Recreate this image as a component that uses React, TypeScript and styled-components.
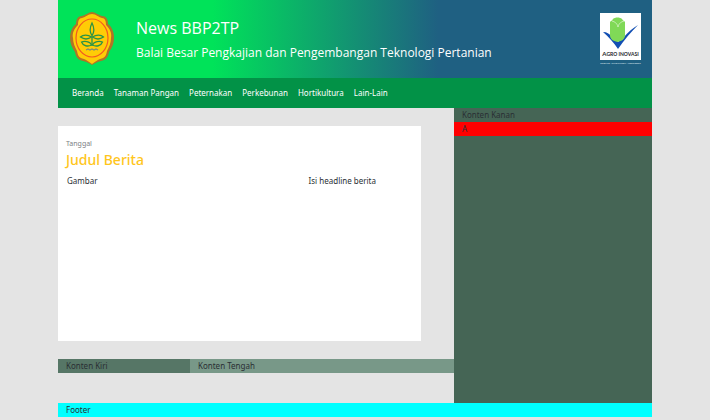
import React from "react";
import styled, { createGlobalStyle } from "styled-components";

const GlobalStyle = createGlobalStyle`
  *, *::before, *::after { box-sizing: border-box; }
  body {
    margin: 0;
    background: #e4e4e4;
    color: #2a2f34;
    font-family: "Noto Sans", "Open Sans", sans-serif;
    font-size: 8px;
    line-height: 14px;
  }
  h1, h2, p { margin: 0; font-weight: 400; }
`;

const Page = styled.div`
  padding: 0 58px;
`;

const Header = styled.header`
  display: flex;
  align-items: center;
  padding: 12px 10px 12px 12px;
  background: linear-gradient(to right, #00e359 26%, #1f6082 64%);
  color: #fff;
  font-family: "Open Sans", "Noto Sans", sans-serif;
`;

const Titles = styled.div`
  flex: 1;
  padding-left: 22px;
`;

const SiteName = styled.h1`
  font-size: 16px;
  line-height: 28px;
`;

const Institute = styled.p`
  font-size: 12px;
  line-height: 22px;
`;

const Nav = styled.nav`
  display: flex;
  flex-wrap: wrap;
  gap: 0 10px;
  padding: 8px 14px;
  background: #029247;
`;

const NavLink = styled.a`
  color: #fff;
  text-decoration: none;
`;

const Columns = styled.div`
  display: grid;
  grid-template-columns: 2fr 1fr;
`;

const Main = styled.main`
  padding: 18px 0 30px;
`;

const Headline = styled.article`
  width: 91.7%;
  min-height: 215px;
  margin-bottom: 18px;
  padding: 11px 8px;
  background: #fff;
`;

const DateLabel = styled.p`
  color: #7d8083;
  font-size: 7px;
`;

const HeadlineTitle = styled.h2`
  color: #ffc61c;
  font-size: 14px;
  font-weight: 500;
  line-height: 18px;
`;

const HeadlineBody = styled.div`
  display: grid;
  grid-template-columns: 7fr 3fr;
  padding: 5px 1px;
`;

const Sections = styled.div`
  display: grid;
  grid-template-columns: 1fr 2fr;
`;

const Strip = styled.div<{ $color: string }>`
  padding: 0 8px;
  background: ${(p) => p.$color};
`;

const Sidebar = styled.aside`
  background: #456555;
`;

const Emblem = () => (
  <svg width="44" height="54" viewBox="0 0 44 54" role="img" aria-label="Kementerian Pertanian">
    <path
      d="M22 0C25 0 28 3 32 4C36 4 38 7 38 12C42 15 44 20 44 26C44 31 42 36 39 40C38 45 36 48 31 49C27 50 25 51 22 53C19 51 17 50 13 49C8 48 6 45 5 40C2 36 0 31 0 26C0 20 2 15 6 12C6 7 8 4 12 4C16 3 19 0 22 0Z"
      fill="#b17326"
    />
    <path
      d="M22 2C26 2 28 5 32 6C35 6 36 9 36 13C40 17 42 21 41 26C41 31 39 35 37 39C36 44 35 46 30 47C27 48 25 50 22 52C19 50 17 48 14 47C9 46 8 44 7 39C5 35 3 31 3 26C2 21 4 17 8 13C8 9 9 6 12 6C16 5 18 2 22 2Z"
      fill="#ffcc06"
    />
    <ellipse cx="22" cy="26" rx="16" ry="19" fill="none" stroke="#f35a21" strokeWidth="1.2" />
    <g fill="none" stroke="#2d9345" strokeWidth="1.3">
      <path d="M22 11C24.500 16 24.500 20 22 23.500C19.500 20 19.500 16 22 11ZM22 23V34" />
      <path d="M21.500 25C18 22.500 13 22.500 10.500 25C14 27.500 18 27.500 21.500 25ZM22.500 25C26 22.500 31 22.500 33.500 25C30 27.500 26 27.500 22.500 25Z" />
      <path d="M21.500 33C20 29 14 29 11.500 30C13 34 18 35 21.500 33ZM22.500 33C24 29 30 29 32.500 30C31 34 26 35 22.500 33Z" />
    </g>
    <path d="M16 38L18 37L20 38L22 37L24 38L26 37L28 38" fill="none" stroke="#7c8c76" strokeWidth="1.2" />
  </svg>
);

const AgroLogo = () => (
  <svg width="42" height="52" viewBox="0 0 42 52" role="img" aria-label="Agro Inovasi">
    <rect width="41" height="47" fill="#fff" />
    <path d="M3 19C7 19 10 21 12 24L18 29L24 24C28 19 33 15 38 12C31 19 24 27 18 36C14 30 9 24 3 19Z" fill="#124fb3" />
    <path
      d="M10 9C10 8 12 8 13 6C15 4 20 4 22 6C23 8 25 8 25 9V22C25 26 22 28 17.500 29C13 28 10 26 10 22Z"
      fill="#80d957"
    />
    <path d="M12 8C15 9 17 10 18 14C19 10 21 9 24 8" fill="none" stroke="#d7f3c8" strokeWidth="0.8" />
    <text
      x="20.5"
      y="43"
      textAnchor="middle"
      fontFamily="Lato, sans-serif"
      fontWeight="700"
      fontSize="5"
      fill="#26262b"
    >
      <tspan fontSize="6">A</tspan>GRO INOVASI
    </text>
    <text x="20.5" y="51" textAnchor="middle" fontFamily="Lato, sans-serif" fontSize="2.300" fontWeight="700" fill="#d5e1ea">
      SCIENCE . INNOVATION . NETWORKS
    </text>
  </svg>
);

const menu = ["Beranda", "Tanaman Pangan", "Peternakan", "Perkebunan", "Hortikultura", "Lain-Lain"];

export default function App() {
  return (
    <>
      <GlobalStyle />
      <Page>
        <Header>
          <Emblem />
          <Titles>
            <SiteName>News BBP2TP</SiteName>
            <Institute>Balai Besar Pengkajian dan Pengembangan Teknologi Pertanian</Institute>
          </Titles>
          <AgroLogo />
        </Header>
        <Nav>
          {menu.map((item) => (
            <NavLink key={item} href="#">
              {item}
            </NavLink>
          ))}
        </Nav>
        <Columns>
          <Main>
            <Headline>
              <DateLabel>Tanggal</DateLabel>
              <HeadlineTitle>Judul Berita</HeadlineTitle>
              <HeadlineBody>
                <p>Gambar</p>
                <p>Isi headline berita</p>
              </HeadlineBody>
            </Headline>
            <Sections>
              <Strip $color="#567666">Konten Kiri</Strip>
              <Strip $color="#789888">Konten Tengah</Strip>
            </Sections>
          </Main>
          <Sidebar>
            <Strip $color="#456555">Konten Kanan</Strip>
            <Strip $color="#ff0000">A</Strip>
          </Sidebar>
        </Columns>
        <Strip as="footer" $color="#00ffff">
          Footer
        </Strip>
      </Page>
    </>
  );
}
